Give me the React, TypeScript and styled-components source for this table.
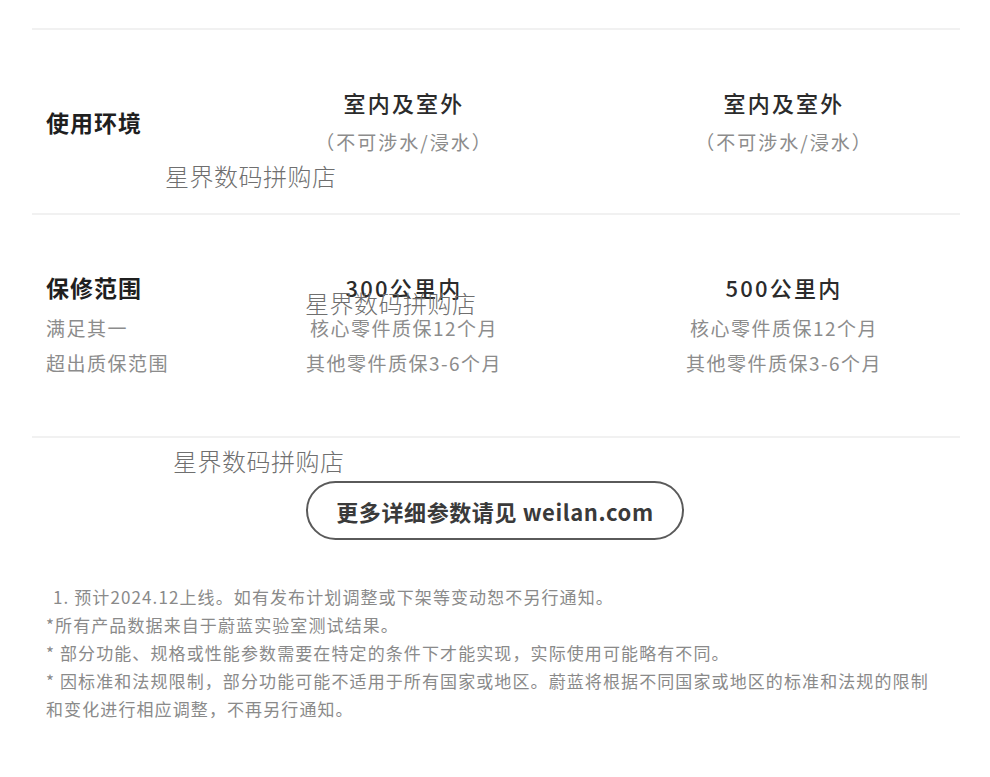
import React from 'react';
import styled, { createGlobalStyle } from 'styled-components';

const GlobalStyle = createGlobalStyle`
  html, body {
    margin: 0;
    padding: 0;
    background: #ffffff;
  }
  body {
    font-family: "Noto Sans CJK SC", "Noto Sans", sans-serif;
    color: #333;
  }
`;

const Page = styled.div`
  position: relative;
  width: 990px;
  min-height: 777px;
  padding: 28px 30px 0 32px;
  box-sizing: border-box;
  overflow: hidden;
`;

const SpecTable = styled.div`
  border-top: 2px solid #f1f1f1;
`;

const SpecRow = styled.div`
  display: grid;
  grid-template-columns: 168px 380px 380px;
  align-items: center;
  padding: 56px 0 56px 14px;
  border-bottom: 2px solid #f1f1f1;
`;

const LabelCell = styled.div`
  display: flex;
  flex-direction: column;
`;

const ValueCell = styled.div`
  display: flex;
  flex-direction: column;
  align-items: center;
  text-align: center;
`;

const RowTitle = styled.div`
  font-size: 23px;
  line-height: 32px;
  font-weight: 700;
  color: #1f1f1f;
  letter-spacing: 1px;
`;

const MainValue = styled.div`
  font-size: 22px;
  line-height: 32px;
  font-weight: 500;
  color: #2b2b2b;
  letter-spacing: 2.2px;
`;

const SubText = styled.div<{ $tight?: boolean }>`
  font-size: 19px;
  line-height: ${(p) => (p.$tight ? '35px' : '30px')};
  margin-top: ${(p) => (p.$tight ? '0' : '9px')};
  color: #8c8c8c;
  letter-spacing: ${(p) => (p.$tight ? '1.5px' : '2px')};
  white-space: nowrap;
`;

const SubStack = styled.div`
  display: flex;
  flex-direction: column;
  align-items: inherit;
  margin-top: 7px;
`;

const ButtonWrap = styled.div`
  display: flex;
  justify-content: center;
  margin-top: 43px;
  margin-left: -32px;
  margin-right: -30px;
`;

const MoreButton = styled.button`
  height: 59px;
  padding: 0 28px;
  border: 2px solid #5a5a5a;
  border-radius: 30px;
  background: #fff;
  font-family: "Noto Sans CJK SC", "Noto Sans", sans-serif;
  font-size: 22px;
  font-weight: 700;
  color: #3a3a3a;
  letter-spacing: 0.6px;
  cursor: pointer;
`;

const Notes = styled.div`
  margin-top: 43px;
  padding-left: 14px;
  font-size: 17px;
  line-height: 28px;
  color: #8a8a8a;
  letter-spacing: 1.1px;
`;

const Note = styled.p<{ $indent?: boolean }>`
  margin: 0;
  text-indent: ${(p) => (p.$indent ? '7px' : '0')};
  white-space: nowrap;
`;

const Watermark = styled.span<{ $x: number; $y: number }>`
  position: absolute;
  left: ${(p) => p.$x}px;
  top: ${(p) => p.$y}px;
  font-family: "Noto Sans CJK SC", serif;
  font-size: 24px;
  font-weight: 300;
  line-height: 26px;
  color: #6f6f6f;
  letter-spacing: 0.5px;
  pointer-events: none;
`;

export default function App() {
  return (
    <Page>
      <GlobalStyle />
      <SpecTable>
        <SpecRow>
          <LabelCell>
            <RowTitle>使用环境</RowTitle>
          </LabelCell>
          <ValueCell>
            <MainValue>室内及室外</MainValue>
            <SubText>（不可涉水/浸水）</SubText>
          </ValueCell>
          <ValueCell>
            <MainValue>室内及室外</MainValue>
            <SubText>（不可涉水/浸水）</SubText>
          </ValueCell>
        </SpecRow>

        <SpecRow>
          <LabelCell>
            <RowTitle>保修范围</RowTitle>
            <SubStack>
              <SubText $tight>满足其一</SubText>
              <SubText $tight>超出质保范围</SubText>
            </SubStack>
          </LabelCell>
          <ValueCell>
            <MainValue>300公里内</MainValue>
            <SubStack>
              <SubText $tight>核心零件质保12个月</SubText>
              <SubText $tight>其他零件质保3-6个月</SubText>
            </SubStack>
          </ValueCell>
          <ValueCell>
            <MainValue>500公里内</MainValue>
            <SubStack>
              <SubText $tight>核心零件质保12个月</SubText>
              <SubText $tight>其他零件质保3-6个月</SubText>
            </SubStack>
          </ValueCell>
        </SpecRow>
      </SpecTable>

      <ButtonWrap>
        <MoreButton>更多详细参数请见 weilan.com</MoreButton>
      </ButtonWrap>

      <Notes>
        <Note $indent>1. 预计2024.12上线。如有发布计划调整或下架等变动恕不另行通知。</Note>
        <Note>*所有产品数据来自于蔚蓝实验室测试结果。</Note>
        <Note>* 部分功能、规格或性能参数需要在特定的条件下才能实现，实际使用可能略有不同。</Note>
        <Note>* 因标准和法规限制，部分功能可能不适用于所有国家或地区。蔚蓝将根据不同国家或地区的标准和法规的限制</Note>
        <Note>和变化进行相应调整，不再另行通知。</Note>
      </Notes>

      <Watermark $x={165} $y={163}>星界数码拼购店</Watermark>
      <Watermark $x={305} $y={290}>星界数码拼购店</Watermark>
      <Watermark $x={173} $y={448}>星界数码拼购店</Watermark>
    </Page>
  );
}
